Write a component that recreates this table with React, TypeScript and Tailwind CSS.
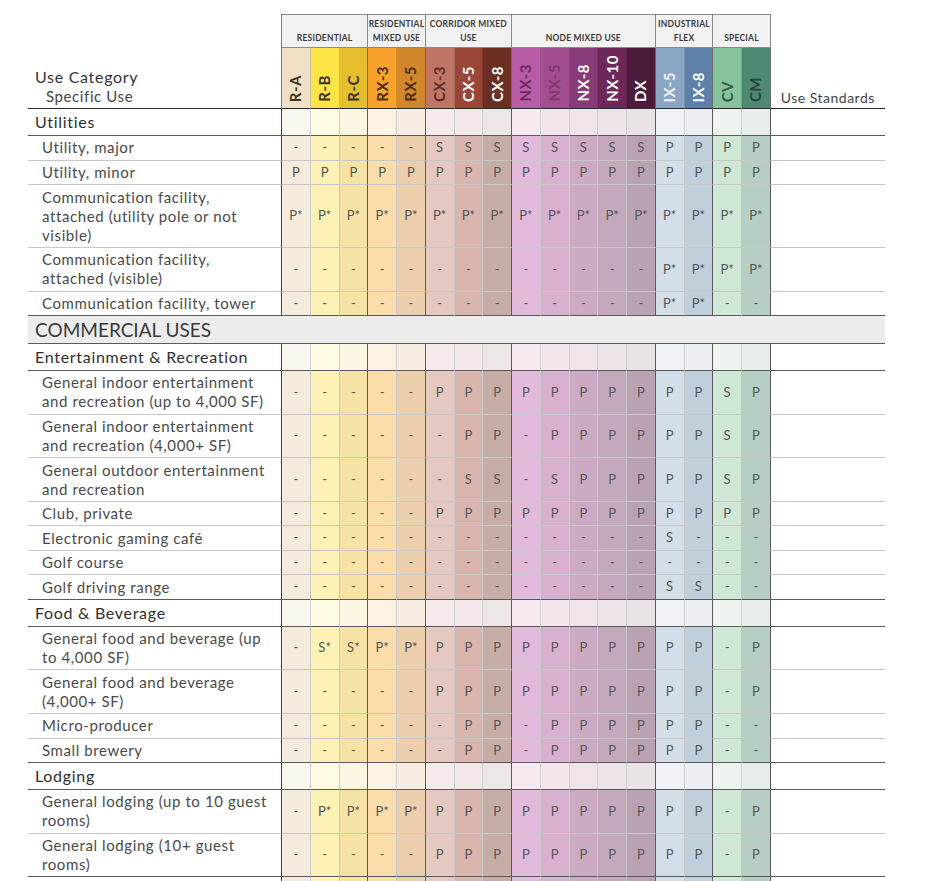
import React from 'react'

type Col = { code: string; head: string; cat: string; cell: string }

const cols: Col[] = [
  { code: 'R-A', head: 'bg-[#efe1c3] text-[#3b3226]', cat: 'bg-[#faf7f1]', cell: 'bg-[#f4ebdc]' },
  { code: 'R-B', head: 'bg-[#fce444] text-[#3b3226]', cat: 'bg-[#fefbe3]', cell: 'bg-[#fcf2b5]' },
  { code: 'R-C', head: 'bg-[#e5bf2e] text-[#3b3226]', cat: 'bg-[#fbf6e2]', cell: 'bg-[#f5e3a6]' },
  { code: 'RX-3', head: 'bg-[#f8a12c] text-[#4a2e10]', cat: 'bg-[#fdf3e4]', cell: 'bg-[#fbdcab]' },
  { code: 'RX-5', head: 'bg-[#d3862b] text-[#4a2e10]', cat: 'bg-[#f6eee3]', cell: 'bg-[#eccfad]' },
  { code: 'CX-3', head: 'bg-[#c07667] text-[#5a2c24]', cat: 'bg-[#f4ebea]', cell: 'bg-[#e5c8c0]' },
  { code: 'CX-5', head: 'bg-[#9a4636] text-white', cat: 'bg-[#f1e8e7]', cell: 'bg-[#d9b6ad]' },
  { code: 'CX-8', head: 'bg-[#6a2e22] text-white', cat: 'bg-[#ece6e4]', cell: 'bg-[#c6aea7]' },
  { code: 'NX-3', head: 'bg-[#b85ca8] text-[#6b2a5e]', cat: 'bg-[#f5e8f1]', cell: 'bg-[#e2badb]' },
  { code: 'NX-5', head: 'bg-[#a24d8f] text-[#7e3a6e]', cat: 'bg-[#f2e5ee]', cell: 'bg-[#d7b1cf]' },
  { code: 'NX-8', head: 'bg-[#8a3a78] text-white', cat: 'bg-[#efe4eb]', cell: 'bg-[#ccaac4]' },
  { code: 'NX-10', head: 'bg-[#6e2759] text-white', cat: 'bg-[#ede4e9]', cell: 'bg-[#c4a9bc]' },
  { code: 'DX', head: 'bg-[#4c1b3a] text-white', cat: 'bg-[#e9e2e6]', cell: 'bg-[#b9a3b2]' },
  { code: 'IX-5', head: 'bg-[#8aa6c5] text-[#eef3f8]', cat: 'bg-[#eff2f6]', cell: 'bg-[#d3dfe8]' },
  { code: 'IX-8', head: 'bg-[#5d80a9] text-white', cat: 'bg-[#ebeef2]', cell: 'bg-[#bfcfdc]' },
  { code: 'CV', head: 'bg-[#85c49a] text-[#365a43]', cat: 'bg-[#edf4ef]', cell: 'bg-[#cfe7d5]' },
  { code: 'CM', head: 'bg-[#4d8a72] text-[#27463a]', cat: 'bg-[#e8eeeb]', cell: 'bg-[#b7cec4]' },
]

const groupEnds = new Set([2, 4, 7, 12, 14, 16])

const groups = [
  { lines: ['RESIDENTIAL'], span: 'col-span-3' },
  { lines: ['RESIDENTIAL', 'MIXED USE'], span: 'col-span-2' },
  { lines: ['CORRIDOR MIXED', 'USE'], span: 'col-span-3' },
  { lines: ['NODE MIXED USE'], span: 'col-span-5' },
  { lines: ['INDUSTRIAL', 'FLEX'], span: 'col-span-2' },
  { lines: ['SPECIAL'], span: 'col-span-2' },
]

type Row =
  | { kind: 'sec'; label: string }
  | { kind: 'cat'; label: string }
  | { kind: 'use'; label: string[]; vals: string; darkBottom?: boolean }

const dashes = (n: number) => Array(n).fill('-').join(' ')
const all = (v: string) => Array(17).fill(v).join(' ')

const rows: Row[] = [
  { kind: 'cat', label: 'Utilities' },
  { kind: 'use', label: ['Utility, major'], vals: '- - - - - S S S S S S S S P P P P' },
  { kind: 'use', label: ['Utility, minor'], vals: all('P') },
  { kind: 'use', label: ['Communication facility,', 'attached (utility pole or not', 'visible)'], vals: all('P*') },
  { kind: 'use', label: ['Communication facility,', 'attached (visible)'], vals: dashes(13) + ' P* P* P* P*' },
  { kind: 'use', label: ['Communication facility, tower'], vals: dashes(13) + ' P* P* - -' },
  { kind: 'sec', label: 'COMMERCIAL USES' },
  { kind: 'cat', label: 'Entertainment & Recreation' },
  { kind: 'use', label: ['General indoor entertainment', 'and recreation (up to 4,000 SF)'], vals: '- - - - - P P P P P P P P P P S P' },
  { kind: 'use', label: ['General indoor entertainment', 'and recreation (4,000+ SF)'], vals: '- - - - - - P P - P P P P P P S P' },
  { kind: 'use', label: ['General outdoor entertainment', 'and recreation'], vals: '- - - - - - S S - S P P P P P S P' },
  { kind: 'use', label: ['Club, private'], vals: '- - - - - P P P P P P P P P P P P' },
  { kind: 'use', label: ['Electronic gaming café'], vals: dashes(13) + ' S - - -' },
  { kind: 'use', label: ['Golf course'], vals: dashes(17) },
  { kind: 'use', label: ['Golf driving range'], vals: dashes(13) + ' S S - -' },
  { kind: 'cat', label: 'Food & Beverage' },
  { kind: 'use', label: ['General food and beverage (up', 'to 4,000 SF)'], vals: '- S* S* P* P* P P P P P P P P P P - P' },
  { kind: 'use', label: ['General food and beverage', '(4,000+ SF)'], vals: '- - - - - P P P P P P P P P P - P' },
  { kind: 'use', label: ['Micro-producer'], vals: '- - - - - - P P - P P P P P P - -' },
  { kind: 'use', label: ['Small brewery'], vals: '- - - - - - P P - P P P P P P - -' },
  { kind: 'cat', label: 'Lodging' },
  { kind: 'use', label: ['General lodging (up to 10 guest', 'rooms)'], vals: '- P* P* P* P* P P P P P P P P P P - P' },
  { kind: 'use', label: ['General lodging (10+ guest', 'rooms)'], vals: '- - - - - P P P P P P P P P P - P', darkBottom: true },
  // next row starts just below the fold; only its colour shows
  { kind: 'use', label: [''], vals: all('') },
]

const useHeight = ['h-[24.5px]', 'h-[43.6px]', 'h-[63px]']

export default function App() {
  return (
    <div className="w-[942px] h-[881px] overflow-hidden bg-white pt-[14px] pl-[28px] font-['Lato','Noto_Sans',sans-serif]">
      <div className="grid w-[857px] grid-cols-[254px_repeat(17,28.76px)_114px]">
        {/* header */}
        <div className="row-span-2 flex flex-col justify-end pb-[2px] border-b border-b-[#2a2a2a] border-r border-r-[#7a7a7a]">
          <div className="pl-[7px] text-[16px] leading-[20px] tracking-[0.7px] text-[#333]">Use Category</div>
          <div className="pl-[18px] text-[15px] leading-[19px] tracking-[0.6px] text-[#444]">Specific Use</div>
        </div>
        {groups.map((g) => (
          <div
            key={g.lines.join()}
            className={`${g.span} h-[34px] flex flex-col justify-end items-center pb-[2px] bg-[#f2f2f2] border-t border-t-[#8a8a8a] border-r border-r-[#8a8a8a] border-b border-b-[#8a8a8a] text-[8.5px] leading-[14px] tracking-[0.2px] font-bold text-[#3a3a3a]`}
          >
            {g.lines.map((l) => (
              <div key={l} className="whitespace-nowrap">{l}</div>
            ))}
          </div>
        ))}
        <div className="row-span-2 flex items-end pl-[10px] pb-[1px] border-b border-b-[#2a2a2a]">
          <span className="text-[14px] leading-[19px] tracking-[0.5px] text-[#444]">Use Standards</span>
        </div>
        {cols.map((c, i) => (
          <div
            key={c.code}
            className={`${c.head} h-[61px] flex flex-col justify-end items-center pb-[6px] border-b border-b-[#2a2a2a] ${groupEnds.has(i) ? 'border-r border-r-[#6a6a6a]' : 'border-r border-r-[#00000022]'}`}
          >
            <span className="inline-block rotate-180 [writing-mode:vertical-rl] text-[15px] leading-[15px] font-bold tracking-[0.5px]">
              {c.code}
            </span>
          </div>
        ))}

        {/* body */}
        {rows.map((r, ri) => {
          const next = rows[ri + 1]
          const dark =
            r.kind !== 'use' || !next || next.kind !== 'use' || (r.kind === 'use' && r.darkBottom)
          const bottom = dark ? 'border-b border-b-[#5a5a5a]' : 'border-b border-b-[#c8c8c8]'

          if (r.kind === 'sec') {
            return (
              <div
                key={ri}
                className={`col-span-full h-[28px] flex items-center pl-[7px] bg-[#ececec] ${bottom} text-[19px] leading-[22px] text-[#3a3a3a]`}
              >
                {r.label}
              </div>
            )
          }

          if (r.kind === 'cat') {
            return (
              <React.Fragment key={ri}>
                <div className={`h-[27px] flex items-center pl-[7px] border-r border-r-[#444] ${bottom} text-[16px] leading-[20px] tracking-[0.7px] text-[#2f2f2f]`}>
                  {r.label}
                </div>
                {cols.map((c, i) => (
                  <div
                    key={c.code}
                    className={`${c.cat} ${bottom} ${groupEnds.has(i) ? 'border-r border-r-[#5a5a5a]' : 'border-r border-r-[#cfcfcf]'}`}
                  />
                ))}
                <div className={bottom} />
              </React.Fragment>
            )
          }

          const vals = r.vals.split(' ')
          return (
            <React.Fragment key={ri}>
              <div
                className={`${useHeight[r.label.length - 1]} flex flex-col justify-center pl-[14px] border-r border-r-[#444] ${bottom} text-[15px] leading-[19px] tracking-[0.6px] text-[#4a4a4a]`}
              >
                {r.label.map((l, li) => (
                  <div key={li} className="whitespace-nowrap">{l}</div>
                ))}
              </div>
              {cols.map((c, i) => (
                <div
                  key={c.code}
                  className={`${c.cell} ${bottom} ${groupEnds.has(i) ? 'border-r border-r-[#5a5a5a]' : 'border-r border-r-[#c8c8c8]'} flex items-center justify-center text-[13px] text-[#555]`}
                >
                  {vals[i]}
                </div>
              ))}
              <div className={bottom} />
            </React.Fragment>
          )
        })}
      </div>
    </div>
  )
}
